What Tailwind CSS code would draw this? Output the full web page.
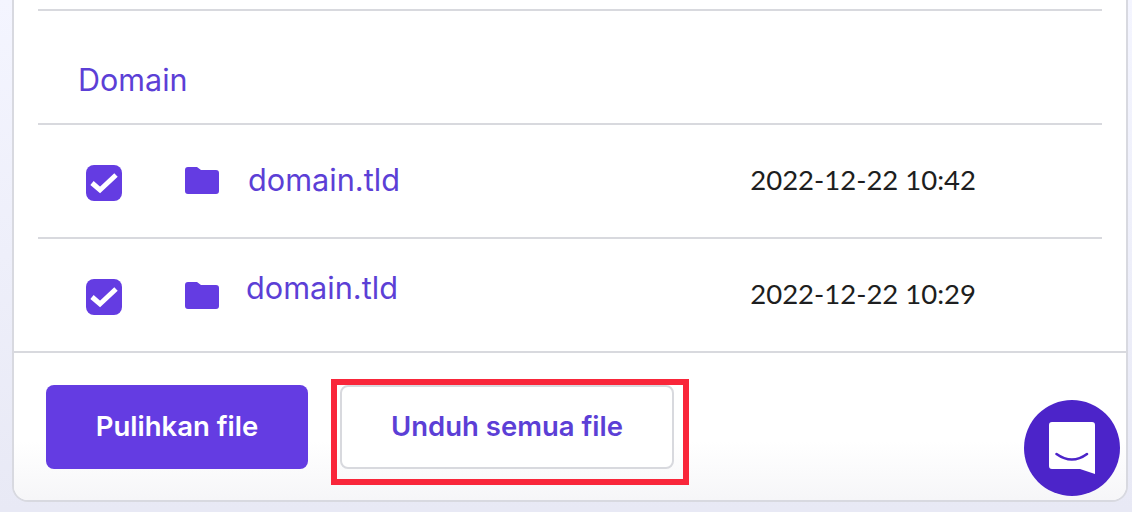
<!DOCTYPE html>
<html lang="id">
  <head>
    <meta charset="UTF-8" />
    <title>Unduh semua file</title>
    <script src="https://cdn.jsdelivr.net/npm/@tailwindcss/browser@4"></script>
  </head>
  <body class="relative h-[512px] w-[1132px] overflow-hidden bg-gradient-to-b from-[#f4f5ff] to-[#e8e9f5] font-['Inter',sans-serif]">
    <div class="ml-3 mr-1 flex h-[502px] flex-col rounded-b-[16px] border-x-2 border-b-2 border-[#d8d9e0] bg-white">
      <div class="flex-1 px-6 pt-[9px]">
        <div class="h-[114px] border-t-2 border-[#d8d9de] pl-[40px] pt-[50px] text-[30.5px] leading-[38px] text-[#5c3fd6]">Domain</div>

        <div class="flex h-[114px] items-start border-t-2 border-[#d8d9de]">
          <div class="ml-[48px] mt-[40px] h-9 w-9 rounded-lg bg-[#643ce2]">
            <svg class="h-9 w-9" viewBox="0 0 36 36" fill="none" stroke="white" stroke-width="5"><path d="M6 18 14 25 30 10" /></svg>
          </div>
          <svg class="ml-[63px] mt-[41px] h-7 w-[34px]" viewBox="0 0 34 28" fill="#643ce2"><path d="M3 1h9l4 3h15a3 3 0 0 1 3 3v18a3 3 0 0 1-3 3H3a3 3 0 0 1-3-3V4a3 3 0 0 1 3-3z" /></svg>
          <a class="ml-[29px] mt-[35px] text-[30.7px] leading-[40px] text-[#5c3fd6]">domain.tld</a>
          <span class="ml-auto mr-[126px] mt-[36px] font-['Lato',sans-serif] text-[27.5px] leading-[38px] text-[#1d1e20]">2022-12-22 10:42</span>
        </div>

        <div class="flex h-[114px] items-start border-t-2 border-[#d8d9de]">
          <div class="ml-[48px] mt-[40px] h-9 w-9 rounded-lg bg-[#643ce2]">
            <svg class="h-9 w-9" viewBox="0 0 36 36" fill="none" stroke="white" stroke-width="5"><path d="M6 18 14 25 30 10" /></svg>
          </div>
          <svg class="ml-[63px] mt-[42px] h-7 w-[34px]" viewBox="0 0 34 28" fill="#643ce2"><path d="M3 1h9l4 3h15a3 3 0 0 1 3 3v18a3 3 0 0 1-3 3H3a3 3 0 0 1-3-3V4a3 3 0 0 1 3-3z" /></svg>
          <a class="ml-[27px] mt-[29px] text-[30.7px] leading-[40px] text-[#5c3fd6]">domain.tld</a>
          <span class="ml-auto mr-[126px] mt-[36px] font-['Lato',sans-serif] text-[27.5px] leading-[38px] text-[#1d1e20]">2022-12-22 10:29</span>
        </div>
      </div>

      <div class="flex h-[149px] items-start gap-[32px] rounded-b-[14px] border-t-2 border-[#d8d9de] bg-gradient-to-b from-white from-60% to-[#f6f6f8] pl-[32px] pt-[32px]">
        <button class="h-[84px] w-[262px] rounded-lg bg-[#643ce2] text-[27.5px] font-semibold text-white">Pulihkan file</button>
        <div class="relative">
          <button class="h-[84px] w-[334px] rounded-lg border-2 border-[#d8d9de] bg-white text-[27.5px] font-semibold text-[#5c3fd6]">Unduh semua file</button>
          <div class="absolute -bottom-[16px] -left-[9px] -right-[15px] -top-[6px] border-[6px] border-[#f9263a]"></div>
        </div>
      </div>
    </div>

    <div class="absolute left-[1024px] top-[400px] flex h-24 w-24 items-center justify-center rounded-full bg-[#4c24c9]">
      <svg class="h-[52px] w-[46px]" viewBox="0 0 46 52" fill="none">
        <path d="M3 0h40a3 3 0 0 1 3 3v49l-15-5H3a3 3 0 0 1-3-3V3a3 3 0 0 1 3-3z" fill="white" />
        <path d="M7.5 32Q23 43 38 32" stroke="#4c24c9" stroke-width="2.6" stroke-linecap="round" />
      </svg>
    </div>
  </body>
</html>
